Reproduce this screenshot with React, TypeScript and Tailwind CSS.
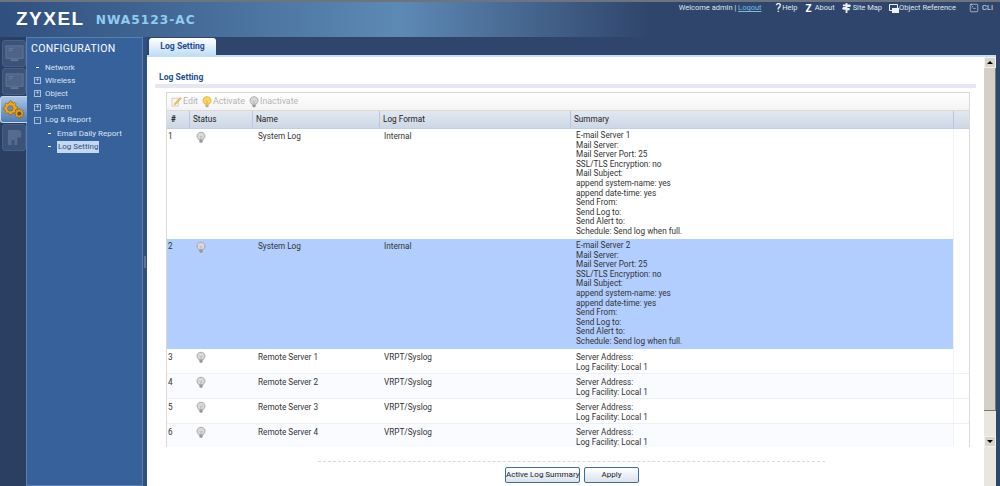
import { SquareTerminal } from "lucide-react";

const emailLines = [
  "Mail Server:",
  "Mail Server Port: 25",
  "SSL/TLS Encryption: no",
  "Mail Subject:",
  "append system-name: yes",
  "append date-time: yes",
  "Send From:",
  "Send Log to:",
  "Send Alert to:",
  "Schedule: Send log when full.",
];

const serverLines = ["Server Address:", "Log Facility: Local 1"];

const rows = [
  { id: 1, name: "System Log", format: "Internal", summary: ["E-mail Server 1", ...emailLines], big: true, rowClass: "h-[110px] bg-white" },
  { id: 2, name: "System Log", format: "Internal", summary: ["E-mail Server 2", ...emailLines], big: true, rowClass: "h-[110px] bg-[#b2ceff]" },
  { id: 3, name: "Remote Server 1", format: "VRPT/Syslog", summary: serverLines, big: false, rowClass: "h-[25px] bg-white border-b border-[#eef0f3]" },
  { id: 4, name: "Remote Server 2", format: "VRPT/Syslog", summary: serverLines, big: false, rowClass: "h-[25px] bg-[#fafbfe] border-b border-[#eef0f3]" },
  { id: 5, name: "Remote Server 3", format: "VRPT/Syslog", summary: serverLines, big: false, rowClass: "h-[25px] bg-white border-b border-[#eef0f3]" },
  { id: 6, name: "Remote Server 4", format: "VRPT/Syslog", summary: serverLines, big: false, rowClass: "h-[25px] bg-[#fafbfe]" },
];

const menu = [
  { label: "Network", mark: "dot" },
  { label: "Wireless", mark: "plus" },
  { label: "Object", mark: "plus" },
  { label: "System", mark: "plus" },
  { label: "Log & Report", mark: "minus" },
];

const Bulb = ({ on = false, className = "" }: { on?: boolean; className?: string }) => (
  <svg viewBox="0 0 12 14" className={className}>
    <path
      d="M6 .7C3.2.7 1.2 2.7 1.2 5.2c0 1.900 1.300 2.900 2 4.300h5.600c.7-1.400 2-2.400 2-4.300C10.800 2.700 8.800.7 6 .7z"
      fill={on ? "#ffd75a" : "#d9d9d9"}
      stroke={on ? "#d6a72a" : "#969696"}
      strokeWidth=".9"
    />
    <path d="M4 10h4v2.300l-1 1H5l-1-1z" fill={on ? "#b9b08a" : "#989898"} />
    <path d="M4.500 5l1.500 2 1.500-2M6 7v2.500" fill="none" stroke={on ? "#e6b030" : "#a5a5a5"} strokeWidth=".7" />
  </svg>
);

const Gears = () => (
  <svg viewBox="0 0 24 22" className="w-[22px] h-[21px]">
    <g fill="#eca71d" stroke="#8a5a08" strokeWidth=".7">
      <path d="M8 1.500l1.400.3.500 1.700 1.300.6 1.600-.8 1.500 1.500-.8 1.600.6 1.300 1.700.5v2.200l-1.700.5-.6 1.300.8 1.600-1.500 1.500-1.600-.8-1.300.6-.5 1.700H7l-.5-1.700-1.300-.6-1.600.8L2 14.300l.8-1.600-.6-1.300L.5 10.900V8.700l1.700-.5.6-1.300L2 5.300l1.600-1.500 1.600.8 1.300-.6.500-1.700z" />
      <path d="M17.500 10l1 .2.300 1.200.9.400 1.100-.6 1 1-.6 1.100.4.900 1.200.3v1.500l-1.200.3-.4.900.6 1.100-1 1-1.100-.6-.9.4-.3 1.200h-1.500l-.3-1.200-.9-.4-1.100.6-1-1 .6-1.100-.4-.9-1.200-.3v-1.500l1.200-.3.4-.9-.6-1.100 1-1 1.100.6.9-.4.300-1.200z" />
    </g>
    <circle cx="8" cy="9.800" r="3" fill="#6a8fc0" stroke="#8a5a08" strokeWidth=".7" />
    <circle cx="17.800" cy="15.500" r="2" fill="#5c5030" stroke="#8a5a08" strokeWidth=".7" />
  </svg>
);

const RailTab = ({ children, active = false }: { children?: React.ReactNode; active?: boolean }) => (
  <div
    className={
      active
        ? "w-[27px] h-[27px] flex items-center justify-center bg-gradient-to-b from-[#a9c6e8] to-[#4f7cb3] rounded-l-[3px] border border-r-0 border-[#c4d6ec] relative"
        : "w-[24px] h-[27px] ml-[2px] flex items-center justify-center bg-[#3b5378] rounded-[3px] border border-[#46608a]"
    }
  >
    {children}
  </div>
);

const MonitorShape = () => (
  <svg viewBox="0 0 20 20" className="w-[19px] h-[19px]">
    <rect x="1" y="2" width="18" height="13" fill="#4e6386" stroke="#62779a" strokeWidth="1" />
    <path d="M4 5h5M4 7h3" stroke="#6a7fa0" strokeWidth="1" />
    <path d="M6 17h8" stroke="#62779a" strokeWidth="2" />
  </svg>
);

const ReportShape = () => (
  <svg viewBox="0 0 20 20" className="w-[19px] h-[19px]">
    <path d="M3 2h12l2 2v6h-4v8h-3v-5H7v5H3z" fill="#566b8e" />
  </svg>
);

export default function App() {
  return (
    <div className="font-['Roboto',sans-serif] w-[1000px] h-[486px] overflow-hidden flex flex-col bg-[#30456b] text-[8.200px] text-[#222]">
      {/* Top bar */}
      <header className="h-[37px] shrink-0 border-t-2 border-[#6d7480] bg-gradient-to-r from-[#30507f] via-[#5d8ab5] via-40% to-[#30456b] to-65% flex">
        <div className="font-['Liberation_Sans',sans-serif] text-white text-[19px] font-bold tracking-[1.500px] ml-[16px] mt-[6px] leading-[22px]">ZYXEL</div>
        <div className="font-['DejaVu_Sans',sans-serif] text-[#90cdf1] text-[12.200px] font-bold tracking-[1px] ml-[11px] mt-[10px] leading-[16px]">NWA5123-AC</div>
        <nav className="ml-auto mr-[7px] h-[12px] flex items-center text-[7.500px] text-[#dfe6f0] whitespace-nowrap">
          <span>Welcome admin |&nbsp;</span>
          <span className="text-[#74bdea] underline">Logout</span>
          <span className="ml-[14px] flex items-center"><span className="text-[12px] leading-none text-white mr-[1px]">?</span>Help</span>
          <span className="ml-[8px] flex items-center"><span className="font-bold text-white text-[10px] mr-[3px]">Z</span>About</span>
          <span className="ml-[7px] flex items-center">
            <svg viewBox="0 0 10 11" className="w-[9px] h-[10px] mr-[2px]"><path d="M4 0h2v1.500h3l1 1.500-1 1.500H6v1h2.500v2.500H6V11H4V7.500H1.500L0 6l1.500-1.500H4v-1H1V1.500h3z" fill="#eef2f8" /></svg>
            Site Map
          </span>
          <span className="ml-[7px] flex items-center">
            <svg viewBox="0 0 10 9" className="w-[10px] h-[9px]"><path d="M.5.5h8v6h-8z" fill="none" stroke="#eef2f8" /><path d="M3 4h7v5H3z" fill="#eef2f8" /></svg>
            Object Reference
          </span>
          <span className="ml-[13px] flex items-center"><SquareTerminal className="w-[10px] h-[10px] mr-[3px]" strokeWidth={1.500} />CLI</span>
        </nav>
      </header>

      <div className="flex-1 flex min-h-0">
        {/* Icon rail */}
        <aside className="w-[26px] shrink-0 pt-[3px] flex flex-col gap-px bg-[#2b3f63]">
          <RailTab><MonitorShape /></RailTab>
          <RailTab><MonitorShape /></RailTab>
          <RailTab active><Gears /></RailTab>
          <RailTab><ReportShape /></RailTab>
        </aside>

        {/* Menu panel */}
        <aside className="w-[117px] shrink-0 bg-[#36619b] border border-[#5a80b0] pl-[4px] pt-[4px] text-[8px] text-[#d9e4f2]">
          <div className="text-white text-[10.500px] leading-[14px] tracking-[.3px] mb-[5px]">CONFIGURATION</div>
          {menu.map((m) => (
            <div key={m.label} className="h-[13.200px] flex items-center">
              <span className="w-[13px] flex justify-center text-[#c9d6e8]">
                {m.mark === "dot" ? (
                  <span className="w-[3px] h-px bg-white" />
                ) : (
                  <span className="w-[7px] h-[7px] border border-[#a9bdd6] flex items-center justify-center text-[7px] leading-none">{m.mark === "plus" ? "+" : "-"}</span>
                )}
              </span>
              <span className="ml-px">{m.label}</span>
            </div>
          ))}
          <div className="h-[13.200px] flex items-center pl-[17px]">
            <span className="w-[3px] h-px bg-white mr-[6px]" />Email Daily Report
          </div>
          <div className="h-[13.200px] flex items-center pl-[17px]">
            <span className="w-[3px] h-px bg-white mr-[6px]" /><span className="bg-[#c5d8f0] text-[#30507f] px-px">Log Setting</span>
          </div>
        </aside>

        {/* Splitter */}
        <div className="w-[4px] shrink-0 bg-[#2f4f80] flex items-center justify-center">
          <span className="w-[2px] h-[12px] bg-[#5f7699]" />
        </div>

        {/* Main */}
        <main className="flex-1 min-w-0 flex flex-col pr-[4px]">
          <div className="h-[18px] shrink-0 flex items-end">
            <div className="w-[67px] h-[17px] ml-[2px] rounded-t-[3px] bg-gradient-to-b from-white to-[#c4def6] text-[#1d4f94] font-bold text-[8.600px] flex items-center justify-center">Log Setting</div>
          </div>
          <div className="h-[2px] shrink-0 bg-[#c4def6]" />
          <div className="flex-1 min-h-0 bg-white flex">
            <div className="flex-1 min-w-0">
              <div className="h-[26px] flex items-end pl-[12px] text-[#1d4f94] font-bold text-[8.600px] leading-[11px]">Log Setting</div>
              <div className="h-[4px] mx-[8px] mt-px bg-[#e5e8f1]" />
              <div className="ml-[19px] mr-[14px] mt-[4px] h-[355px] overflow-hidden border-l border-r border-t border-[#dcdad0]">
                {/* Toolbar */}
                <div className="h-[18px] flex items-center pl-[4px] bg-gradient-to-b from-white to-[#f4f4f4] border-b border-[#dcdad0] text-[#b5b5b5] text-[8.800px]">
                  <svg viewBox="0 0 12 12" className="w-[11px] h-[11px]"><path d="M1 2.500h7v8.500H1z" fill="#fbf7e8" stroke="#c8c2a8" strokeWidth=".8" /><path d="M4 8l6-6.500 1.300 1.200L5.300 9l-1.800.5z" fill="#f0c860" stroke="#c9a246" strokeWidth=".6" /></svg>
                  <span className="ml-px w-[19px]">Edit</span>
                  <Bulb on className="w-[10px] h-[12px]" />
                  <span className="ml-px w-[36px]">Activate</span>
                  <Bulb className="w-[10px] h-[12px]" />
                  <span className="ml-px">Inactivate</span>
                </div>
                {/* Header */}
                <div className="h-[18px] grid grid-cols-[23px_63px_127px_191px_383px_1fr] bg-gradient-to-b from-[#e2e8f1] to-[#cdd7e5] border-b border-[#c3d0e2]">
                  {["#", "Status", "Name", "Log Format", "Summary", ""].map((h, i) => (
                    <div key={i} className={`flex items-center pl-[3px] border-r border-[#b9c8de] last:border-r-0 ${i === 0 ? "font-bold pl-[4px]" : ""}`}>{h}</div>
                  ))}
                </div>
                {/* Rows */}
                {rows.map((r) => (
                  <div key={r.id} className={`grid grid-cols-[23px_63px_127px_191px_383px_1fr] ${r.rowClass} text-[#333]`}>
                    <div className={`pl-px leading-[10px] ${r.big ? "pt-[2px]" : "pt-[3px]"}`}>{r.id}</div>
                    <div className="pl-[6px] pt-[2px]"><Bulb className="w-[10px] h-[13px]" /></div>
                    <div className={`pl-[5px] leading-[10px] ${r.big ? "pt-[2px]" : "pt-[3px]"}`}>{r.name}</div>
                    <div className={`pl-[4px] leading-[10px] ${r.big ? "pt-[2px]" : "pt-[3px]"}`}>{r.format}</div>
                    <div className={`pl-[5px] border-r border-[#f3f3f3] ${r.big ? "pt-[2px] leading-[9.600px]" : "pt-[3px] leading-[10px]"}`}>
                      {r.summary.map((s) => <div key={s}>{s}</div>)}
                    </div>
                    <div className="bg-white" />
                  </div>
                ))}
              </div>
              {/* Footer */}
              <div className="mt-[14px] h-px ml-[171px] w-[507px] border-t border-dashed border-[#d9d9d9]" />
              <div className="mt-[5px] ml-[358px] flex gap-[4px]">
                <button className="w-[75px] h-[16px] rounded-[2px] border border-[#3f6c9a] bg-gradient-to-b from-white to-[#d8e2ee] text-[#222] text-[8px] leading-none whitespace-nowrap">Active Log Summary</button>
                <button className="w-[55px] h-[16px] rounded-[2px] border border-[#3f6c9a] bg-gradient-to-b from-white to-[#d8e2ee] text-[#222] text-[8px] leading-none">Apply</button>
              </div>
            </div>
            {/* Scrollbar */}
            <div className="w-[12px] shrink-0 flex flex-col bg-[#e9e6df]">
              <div className="h-[11px] bg-[#d8d4cc] border border-[#f3f1ec] flex items-center justify-center"><span className="border-x-[3px] border-x-transparent border-b-[3px] border-b-black" /></div>
              <div className="h-[343px] bg-[#d4d0c8] border-r border-b border-[#777]" />
              <div className="flex-1" />
              <div className="h-[11px] mb-[39px] bg-[#d8d4cc] border border-[#f3f1ec] flex items-center justify-center"><span className="border-x-[3px] border-x-transparent border-t-[3px] border-t-black" /></div>
            </div>
          </div>
        </main>
      </div>
    </div>
  );
}
